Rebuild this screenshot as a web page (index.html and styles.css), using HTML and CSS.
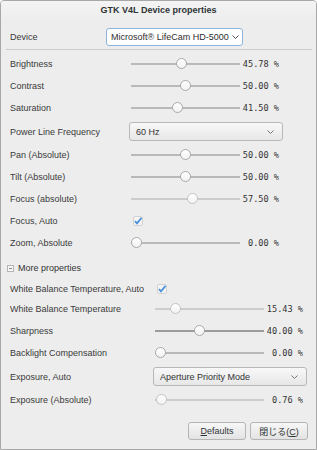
FILE: index.html
```html
<!DOCTYPE html>
<html lang="ja">
<head>
  <meta charset="UTF-8" />
  <title>GTK V4L Device properties</title>
  <link rel="stylesheet" href="styles.css">
</head>
<body>

  <div class="window">
    <div class="titlebar">GTK V4L Device properties</div>

    <div class="content">
      <div class="device-row">
        <span class="label device-label">Device</span>
        <div class="combo device-combo">
          <span>Microsoft® LifeCam HD-5000</span>
          <svg class="chevron" width="7" height="4" viewBox="0 0 7 4"><path d="M0.5 0.5 L3.5 3.5 L6.5 0.5" fill="none" stroke="#555" stroke-width="1"/></svg>
        </div>
      </div>
      <div class="sep"></div>

      <div class="section main">
        <div class="row">
          <span class="label">Brightness</span>
          <div class="slider"><div class="track"><span class="thumb" style="--v:0.4578"></span></div><span class="value">45.78 %</span></div>
        </div>
        <div class="row">
          <span class="label">Contrast</span>
          <div class="slider"><div class="track"><span class="thumb" style="--v:0.5"></span></div><span class="value">50.00 %</span></div>
        </div>
        <div class="row">
          <span class="label">Saturation</span>
          <div class="slider"><div class="track"><span class="thumb" style="--v:0.415"></span></div><span class="value">41.50 %</span></div>
        </div>
        <div class="row combo-row">
          <span class="label">Power Line Frequency</span>
          <div class="combo">
            <span>60 Hz</span>
            <svg class="chevron" width="7" height="4" viewBox="0 0 7 4"><path d="M0.5 0.5 L3.5 3.5 L6.5 0.5" fill="none" stroke="#777" stroke-width="1"/></svg>
          </div>
        </div>
        <div class="row">
          <span class="label">Pan (Absolute)</span>
          <div class="slider"><div class="track"><span class="thumb" style="--v:0.5"></span></div><span class="value">50.00 %</span></div>
        </div>
        <div class="row">
          <span class="label">Tilt (Absolute)</span>
          <div class="slider"><div class="track"><span class="thumb" style="--v:0.5"></span></div><span class="value">50.00 %</span></div>
        </div>
        <div class="row">
          <span class="label">Focus (absolute)</span>
          <div class="slider disabled"><div class="track"><span class="thumb" style="--v:0.575"></span></div><span class="value">57.50 %</span></div>
        </div>
        <div class="row">
          <span class="label">Focus, Auto</span>
          <svg class="check" width="10" height="10" viewBox="0 0 10 10"><rect x="0.5" y="0.5" width="9" height="9" rx="1.5" fill="#f4f4f4" stroke="#d2d2d2"/><path d="M2 5.2 L4 7.4 L8.6 1.8" fill="none" stroke="#4a90d9" stroke-width="1.8"/></svg>
        </div>
        <div class="row">
          <span class="label">Zoom, Absolute</span>
          <div class="slider"><div class="track"><span class="thumb" style="--v:0"></span></div><span class="value">0.00 %</span></div>
        </div>
      </div>

      <div class="expander">
        <span class="exp-box"></span>
        <span>More properties</span>
      </div>

      <div class="section more">
        <div class="row check-row">
          <span class="label">White Balance Temperature, Auto</span>
          <svg class="check" width="10" height="10" viewBox="0 0 10 10"><rect x="0.5" y="0.5" width="9" height="9" rx="1.5" fill="#f4f4f4" stroke="#d2d2d2"/><path d="M2 5.2 L4 7.4 L8.6 1.8" fill="none" stroke="#4a90d9" stroke-width="1.8"/></svg>
        </div>
        <div class="row">
          <span class="label">White Balance Temperature</span>
          <div class="slider disabled"><div class="track"><span class="thumb" style="--v:0.1543"></span></div><span class="value">15.43 %</span></div>
        </div>
        <div class="row">
          <span class="label">Sharpness</span>
          <div class="slider focus"><div class="track"><span class="thumb" style="--v:0.4"></span></div><span class="value">40.00 %</span></div>
        </div>
        <div class="row">
          <span class="label">Backlight Compensation</span>
          <div class="slider"><div class="track"><span class="thumb" style="--v:0"></span></div><span class="value">0.00 %</span></div>
        </div>
        <div class="row combo-row">
          <span class="label">Exposure, Auto</span>
          <div class="combo">
            <span>Aperture Priority Mode</span>
            <svg class="chevron" width="7" height="4" viewBox="0 0 7 4"><path d="M0.5 0.5 L3.5 3.5 L6.5 0.5" fill="none" stroke="#777" stroke-width="1"/></svg>
          </div>
        </div>
        <div class="row">
          <span class="label">Exposure (Absolute)</span>
          <div class="slider disabled"><div class="track"><span class="thumb" style="--v:0.0076"></span></div><span class="value">0.76 %</span></div>
        </div>
      </div>

      <div class="buttons">
        <button><u>D</u>efaults</button>
        <button>閉じる(<u>C</u>)</button>
      </div>
    </div>
  </div>

</body>
</html>
```

FILE: styles.css
```css
body {
  margin: 0;
  background-color: #ffffff;
  color: #2e3436;
  font-family: "Liberation Sans", "Noto Sans CJK JP", sans-serif;
  font-size: 9px;
}

.window {
  width: 317px;
  height: 450px;
  box-sizing: border-box;
  border: 1px solid #a8a8a8;
  border-radius: 4px 4px 0 0;
  background-color: #ededed;
  overflow: hidden;
}

.titlebar {
  height: 19px;
  line-height: 19px;
  text-align: center;
  font-weight: bold;
  color: #2e3436;
  background: linear-gradient(#f4f4f4, #ededed);
}

.content {
  padding: 6px 8px 0 9px;
}

.label {
  color: #3a3a3a;
  white-space: nowrap;
}

/* device selector */
.device-row {
  display: flex;
  align-items: center;
  height: 22px;
}

.device-label {
  width: 96px;
}

.combo {
  display: flex;
  align-items: center;
  justify-content: space-between;
  box-sizing: border-box;
  height: 19px;
  padding: 0 8px 0 6px;
  border: 1px solid #b8b8b8;
  border-radius: 3px;
  background: linear-gradient(#f8f8f8, #e7e7e7);
  color: #333;
}

.device-combo {
  width: 137px;
  height: 18px;
  padding: 0 3px 0 4px;
  border-color: #8eb3de;
  background: #ffffff;
  color: #2e2e2e;
}

.sep {
  height: 1px;
  margin: 1px -4px 3px -4px;
  background-color: #cbcbcb;
}

/* property grids */
.row {
  display: grid;
  align-items: center;
  height: 22px;
}

.main .row {
  grid-template-columns: 119px 154px;
}

.more .row {
  grid-template-columns: 143px 154px;
}

.row.combo-row {
  height: 25px;
}

.row.check-row {
  height: 19px;
}

.slider {
  display: flex;
  align-items: center;
  padding-left: 2px;
}

.track {
  position: relative;
  width: 109px;
  height: 2px;
  background-color: #b9b9b9;
}

.slider.focus .track {
  background-color: #9c9c9c;
}

.thumb {
  position: absolute;
  top: -5px;
  left: calc(var(--v) * 98px);
  width: 11px;
  height: 11px;
  box-sizing: border-box;
  border: 1px solid #a9a9a9;
  border-radius: 50%;
  background: linear-gradient(#ffffff, #f2f2f2);
}

.slider.disabled .thumb {
  border-color: #c4c4c4;
}

.slider.disabled .track {
  background-color: #cccccc;
}

.value {
  width: 37px;
  margin-left: 2px;
  text-align: right;
  white-space: nowrap;
  font-family: "DejaVu Sans Mono", "Liberation Mono", monospace;
  font-size: 8.6px;
  color: #333;
}

.check {
  margin-left: 4px;
}

/* expander */
.expander {
  display: flex;
  align-items: center;
  gap: 4px;
  height: 22px;
  margin: 3px 0 0 -3px;
  color: #333;
}

.exp-box {
  position: relative;
  width: 7px;
  height: 7px;
  box-sizing: border-box;
  border: 1px solid #b5b5b5;
  background-color: #f6f6f6;
}

.exp-box::after {
  content: "";
  position: absolute;
  left: 1px;
  top: 2px;
  width: 3px;
  height: 1px;
  background-color: #888;
}

/* dialog buttons */
.buttons {
  display: flex;
  justify-content: flex-end;
  gap: 4px;
  margin-top: 11px;
}

button {
  width: 58px;
  height: 18px;
  padding: 0;
  border: 1px solid #b5b5b5;
  border-radius: 3px;
  background: linear-gradient(#f7f7f7, #e3e3e3);
  color: #2e3436;
  font-family: "Liberation Sans", "Noto Sans CJK JP", sans-serif;
  font-size: 9px;
}
```
